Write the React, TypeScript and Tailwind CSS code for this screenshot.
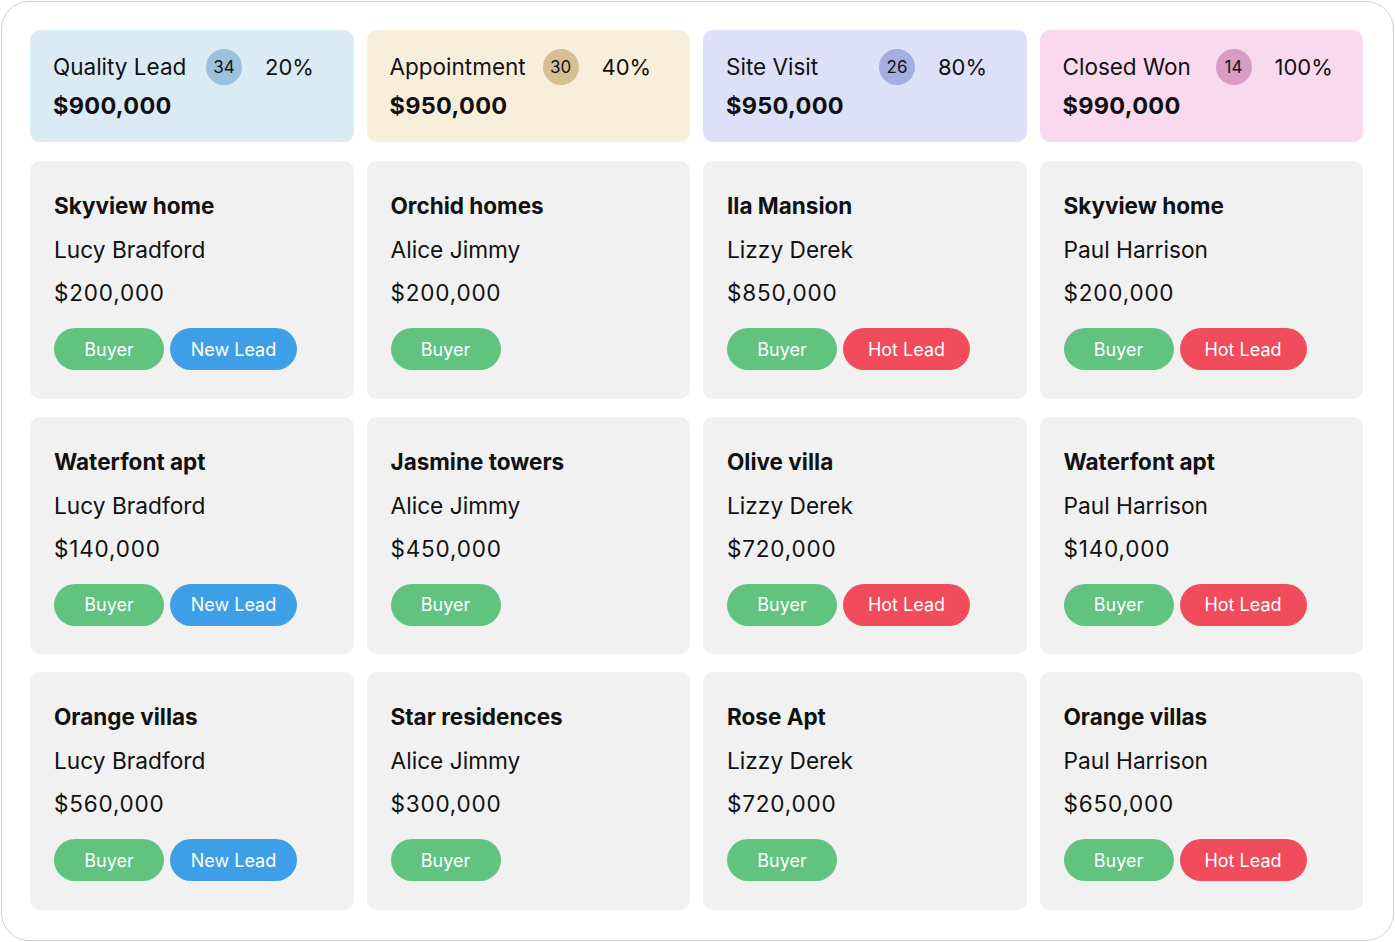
import React from "react";

type Stage = { title: string; count: number; pct: string; amount: string; bg: string; badge: string };

const stages: Stage[] = [
  { title: "Quality Lead", count: 34, pct: "20%", amount: "$900,000", bg: "bg-[#dbebf6]", badge: "bg-[#9bc1df]" },
  { title: "Appointment", count: 30, pct: "40%", amount: "$950,000", bg: "bg-[#f9eedb]", badge: "bg-[#d6bf95]" },
  { title: "Site Visit", count: 26, pct: "80%", amount: "$950,000", bg: "bg-[#dde0f7]", badge: "bg-[#a4aee0]" },
  { title: "Closed Won", count: 14, pct: "100%", amount: "$990,000", bg: "bg-[#f8d9ee]", badge: "bg-[#d69dc5]" },
];

type Deal = { name: string; person: string; price: string; tag?: "new" | "hot" };

const rows: Deal[][] = [
  [
    { name: "Skyview home", person: "Lucy Bradford", price: "$200,000", tag: "new" },
    { name: "Orchid homes", person: "Alice Jimmy", price: "$200,000" },
    { name: "Ila Mansion", person: "Lizzy Derek", price: "$850,000", tag: "hot" },
    { name: "Skyview home", person: "Paul Harrison", price: "$200,000", tag: "hot" },
  ],
  [
    { name: "Waterfont apt", person: "Lucy Bradford", price: "$140,000", tag: "new" },
    { name: "Jasmine towers", person: "Alice Jimmy", price: "$450,000" },
    { name: "Olive villa", person: "Lizzy Derek", price: "$720,000", tag: "hot" },
    { name: "Waterfont apt", person: "Paul Harrison", price: "$140,000", tag: "hot" },
  ],
  [
    { name: "Orange villas", person: "Lucy Bradford", price: "$560,000", tag: "new" },
    { name: "Star residences", person: "Alice Jimmy", price: "$300,000" },
    { name: "Rose Apt", person: "Lizzy Derek", price: "$720,000" },
    { name: "Orange villas", person: "Paul Harrison", price: "$650,000", tag: "hot" },
  ],
];

function Header({ s }: { s: Stage }) {
  return (
    <div className={`h-[112px] rounded-[10px] ${s.bg} pl-[23px] pt-[23px] flex flex-col gap-[11px]`}>
      <div className="flex items-center h-[28px]">
        <span className="w-[153px] text-[22.5px] leading-[28px] text-[#111]">{s.title}</span>
        <span className={`w-[36px] h-[36px] rounded-full ${s.badge} flex items-center justify-center pt-px text-[17px] text-[#111]`}>
          {s.count}
        </span>
        <span className="ml-[23px] text-[22px] leading-[28px] text-[#111]">{s.pct}</span>
      </div>
      <div className="text-[23.5px] leading-[28px] font-bold tracking-[0.3px] text-[#111]">{s.amount}</div>
    </div>
  );
}

function Card({ d }: { d: Deal }) {
  return (
    <div className="h-[237.5px] rounded-[10px] bg-[#f1f1f1] pl-[24px] pt-[31px] flex flex-col">
      <div className="text-[22.5px] leading-[28px] font-bold text-[#111]">{d.name}</div>
      <div className="mt-[16px] text-[22.7px] leading-[28px] text-[#111]">{d.person}</div>
      <div className="mt-[15px] text-[22.5px] leading-[28px] tracking-[0.8px] text-[#111]">{d.price}</div>
      <div className="mt-[21px] flex gap-[6px]">
        <span className="w-[110px] h-[42px] rounded-full bg-[#62c37f] text-white text-[18px] flex items-center justify-center">
          Buyer
        </span>
        {d.tag === "new" && (
          <span className="w-[127px] h-[42px] rounded-full bg-[#3f9fe6] text-white text-[18px] flex items-center justify-center">
            New Lead
          </span>
        )}
        {d.tag === "hot" && (
          <span className="w-[127px] h-[42px] rounded-full bg-[#f14c5c] text-white text-[18px] flex items-center justify-center">
            Hot Lead
          </span>
        )}
      </div>
    </div>
  );
}

export default function App() {
  return (
    <div className="w-[1395px] h-[942px] bg-white p-px" style={{ fontFamily: "Inter, 'Noto Sans', sans-serif" }}>
      <div className="w-[1393px] h-[940px] border border-[#cfcfcf] rounded-[28px] pl-[28px] pt-[28px]">
        <div className="w-[1333px] grid grid-cols-4 gap-x-[13px]">
          {stages.map((s) => (
            <Header key={s.title} s={s} />
          ))}
        </div>
        <div className="w-[1333px] mt-[19px] grid grid-cols-4 gap-x-[13px] gap-y-[18px]">
          {rows.flat().map((d, i) => (
            <Card key={i} d={d} />
          ))}
        </div>
      </div>
    </div>
  );
}
